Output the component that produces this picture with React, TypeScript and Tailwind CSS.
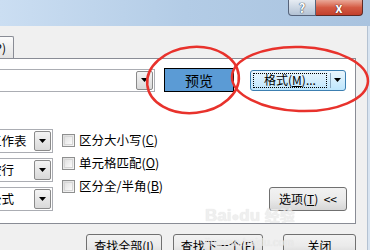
import React from "react";

function Arrow() {
  return (
    <svg width="7" height="4" viewBox="0 0 7 4">
      <path d="M0 0h7L3.5 4z" fill="#000" />
    </svg>
  );
}

function DropButton() {
  return (
    <div className="w-[17px] h-full border border-[#8a8a8a] rounded-[2px] bg-gradient-to-b from-[#f4f4f4] to-[#d9d9d9] flex items-center justify-center">
      <Arrow />
    </div>
  );
}

function SmallCombo({ text }: { text: string }) {
  return (
    <div className="w-[73px] h-[24px] ml-[-20px] border border-[#abadb3] bg-white flex items-center p-px">
      <span className="flex-1 pl-[7px] text-[12.5px] leading-none">{text}</span>
      <DropButton />
    </div>
  );
}

function CheckRow({ label, hot, rest }: { label: string; hot: string; rest: string }) {
  return (
    <div className="flex items-center h-[23px]">
      <div className="w-[13px] h-[13px] border border-[#8e8f8f] bg-gradient-to-br from-[#dcdcdc] to-[#f8f8f8] p-px">
        <div className="w-full h-full border border-[#d6d6d6] bg-gradient-to-br from-[#e2e2e2] to-[#fbfbfb]" />
      </div>
      <span className="ml-[4px] text-[12.5px] leading-none">
        {label}(<span className="underline">{hot}</span>){rest}
      </span>
    </div>
  );
}

function PushButton({ w, children }: { w: string; children: React.ReactNode }) {
  return (
    <div
      className={`${w} h-[23px] shrink-0 border border-[#707070] rounded-[3px] bg-gradient-to-b from-[#f2f2f2] via-[#ebebeb] to-[#d6d6d6] flex items-center justify-center text-[12px] leading-none`}
    >
      {children}
    </div>
  );
}

export default function App() {
  return (
    <div className="w-[370px] h-[250px] relative overflow-hidden bg-[#f0f0f0] text-black font-['Noto_Sans_CJK_SC','Liberation_Sans',sans-serif]">
      {/* title bar */}
      <div className="h-[26px] bg-gradient-to-r from-[#cbdef2] via-[#b3cce6] to-[#a9c3df] flex justify-end pr-[7px]">
        <div className="w-[28px] h-[16px] border border-t-0 border-[#56637a] rounded-bl-[4px] bg-gradient-to-b from-[#e6ecf3] to-[#b3c2d4] flex items-center justify-center text-[13px] font-bold text-white leading-none [text-shadow:0_0_1px_#243447,0_0_1px_#243447]">
          ?
        </div>
        <div className="w-[47px] h-[16px] border border-t-0 border-l-0 border-[#5e2a24] rounded-br-[4px] bg-gradient-to-b from-[#e9a898] via-[#d45a43] to-[#c2402c] flex items-center justify-center text-[13px] font-bold text-white leading-none [text-shadow:0_0_1px_#4a1a12,0_0_1px_#4a1a12]">
          x
        </div>
      </div>

      <div className="flex">
        <div className="w-[367px]">
          {/* tabs */}
          <div className="h-[32px] flex items-end overflow-hidden">
            <div className="w-[60px] h-[22px] ml-[-46px] border border-b-0 border-[#898c95] rounded-t-[2px] bg-gradient-to-b from-[#fbfbfb] to-[#e3e3e3] flex items-center justify-end pr-[7px] text-[12px] leading-none">
              替换(P)
            </div>
          </div>

          {/* tab panel */}
          <div className="w-[356px] h-[166px] bg-white border border-l-0 border-[#898c95] flex flex-col">
            <div className="mt-[9px] h-[24px] flex items-center">
              <div className="w-[156px] h-[23px] ml-[-1px] border border-[#abadb3] bg-white flex justify-end p-px">
                <DropButton />
              </div>
              <div className="ml-[9px] w-[70px] h-[24px] bg-[#5b9bd5] border border-black flex items-center justify-center text-[14px] leading-none">
                预览
              </div>
              <div className="ml-[16px] w-[96px] h-[21px] border border-[#3c7fb1] rounded-[3px] bg-gradient-to-b from-[#eaf6fd] to-[#bee6fd] flex items-center p-[2px]">
                <div className="flex-1 h-full border border-dotted border-black flex items-center justify-center text-[12px] leading-none">
                  格式(<span className="underline">M</span>)...
                </div>
                <div className="w-px h-full bg-[#8aa8c0] mx-[3px]" />
                <Arrow />
                <div className="w-[2px]" />
              </div>
            </div>

            <div className="mt-[37px] flex">
              <div className="flex flex-col gap-[5px]">
                <SmallCombo text="工作表" />
                <SmallCombo text="按行" />
                <SmallCombo text="公式" />
              </div>
              <div className="ml-[9px] flex flex-col">
                <CheckRow label="区分大小写" hot="C" rest="" />
                <CheckRow label="单元格匹配" hot="O" rest="" />
                <CheckRow label="区分全/半角" hot="B" rest="" />
              </div>
              <div className="ml-auto mr-[8px] self-end">
                <div className="w-[78px] h-[24px] border border-[#707070] rounded-[3px] bg-gradient-to-b from-[#f2f2f2] via-[#ebebeb] to-[#d6d6d6] flex items-center justify-center text-[12px] leading-none">
                  选项(<span className="underline">T</span>)&nbsp;&nbsp;&lt;&lt;
                </div>
              </div>
            </div>
          </div>

          {/* bottom buttons */}
          <div className="mt-[10px] flex">
            <div className="ml-[86px]">
              <PushButton w="w-[76px]">
                查找全部(<span className="underline">I</span>)
              </PushButton>
            </div>
            <div className="ml-[11px]">
              <PushButton w="w-[90px]">
                查找下一个(<span className="underline">F</span>)
              </PushButton>
            </div>
            <div className="ml-[20px]">
              <PushButton w="w-[73px]">关闭</PushButton>
            </div>
          </div>
        </div>
        <div className="w-[3px] h-[224px] border-l border-[#b4c2d2] bg-[#d8e4f1]" />
      </div>

      {/* watermark */}
      <div className="absolute left-[205px] top-[207px] pointer-events-none text-[#ececec] leading-none [text-shadow:0_0_1px_#d8d8d8] opacity-80">
        <div className="text-[17px] font-bold font-['Liberation_Sans',sans-serif]">
          Bai<span className="text-[13px]">●</span>du <span className="font-['Noto_Sans_CJK_SC',sans-serif] text-[15px]">经验</span>
        </div>
        <div className="mt-[13px] text-[11px] font-['Liberation_Sans',sans-serif]">jingyan.baidu.com</div>
      </div>

      {/* red annotation ellipses */}
      <svg className="absolute inset-0 pointer-events-none" width="370" height="250" viewBox="0 0 370 250">
        <ellipse cx="193" cy="80" rx="46" ry="33" fill="none" stroke="#e8322c" strokeWidth="2.5" transform="rotate(-6 193 80)" />
        <ellipse cx="300" cy="79" rx="68" ry="32" fill="none" stroke="#e8322c" strokeWidth="2.5" transform="rotate(2 300 79)" />
      </svg>
    </div>
  );
}
